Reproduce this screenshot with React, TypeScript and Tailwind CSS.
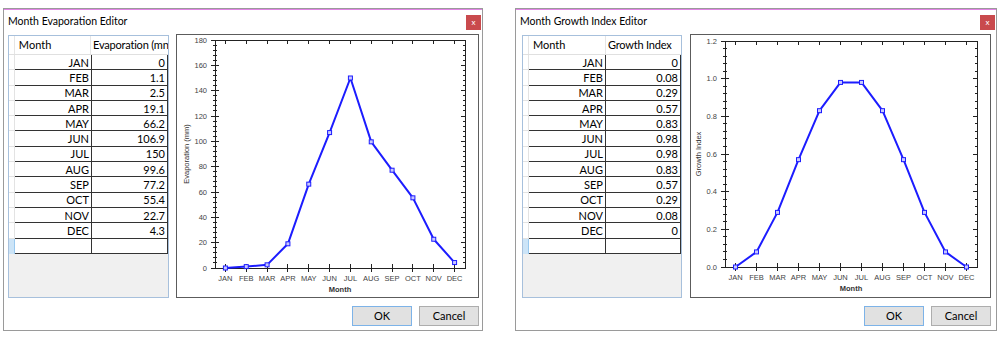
import type { ReactNode } from 'react';

const MONTHS = ['JAN', 'FEB', 'MAR', 'APR', 'MAY', 'JUN', 'JUL', 'AUG', 'SEP', 'OCT', 'NOV', 'DEC'];

type ChartProps = {
  values: number[];
  yMax: number;
  yStep: number;
  fmt: (v: number) => string;
  yTitle: string;
  width: number;
  height: number;
  L: number;
  R: number;
  T: number;
  B: number;
  titleX: number;
};

function Chart({ values, yMax, yStep, fmt, yTitle, width, height, L, R, T, B, titleX }: ChartProps) {
  const sub = 5;
  const majors = Math.round(yMax / yStep);
  const yOf = (v: number) => B - (v / yMax) * (B - T);
  const binW = (R - L) / 12;
  const xOf = (i: number) => L + binW * (i + 0.5);

  const ticks: ReactNode[] = [];
  for (let i = 0; i <= majors * sub; i++) {
    const y = yOf((i / sub) * yStep);
    const major = i % sub === 0;
    const len = major ? 4 : 2;
    ticks.push(<line key={'l' + i} x1={L - len} x2={L + len} y1={y} y2={y} />);
    ticks.push(<line key={'r' + i} x1={R - len} x2={R} y1={y} y2={y} />);
  }
  MONTHS.forEach((_, i) => {
    const x = xOf(i);
    ticks.push(<line key={'b' + i} x1={x} x2={x} y1={B - 4} y2={B + 4} />);
    ticks.push(<line key={'t' + i} x1={x} x2={x} y1={T} y2={T + 4} />);
  });

  const points = values.map((v, i) => `${xOf(i)},${yOf(v)}`).join(' ');

  return (
    <svg width={width} height={height} className="block">
      <g stroke="#222" strokeWidth={1} shapeRendering="crispEdges">
        <rect x={L} y={T} width={R - L} height={B - T} fill="none" />
        {ticks}
      </g>
      <g fill="#444" fontSize={7.5} fontFamily="'Liberation Sans', Arial, sans-serif">
        {Array.from({ length: majors + 1 }, (_, i) => (
          <text key={i} x={L - 8} y={yOf(i * yStep) + 2.5} textAnchor="end">
            {fmt(i * yStep)}
          </text>
        ))}
        {MONTHS.map((m, i) => (
          <text key={m} x={xOf(i)} y={B + 13} textAnchor="middle">
            {m}
          </text>
        ))}
        <text x={(L + R) / 2} y={B + 24} textAnchor="middle" fontWeight="bold" fill="#333">
          Month
        </text>
        <text
          x={titleX}
          y={(T + B) / 2}
          textAnchor="middle"
          fill="#333"
          transform={`rotate(-90 ${titleX} ${(T + B) / 2})`}
        >
          {yTitle}
        </text>
      </g>
      <polyline points={points} fill="none" stroke="#1c1cff" strokeWidth={2} strokeLinejoin="round" />
      {values.map((v, i) => (
        <rect
          key={i}
          x={xOf(i) - 2}
          y={yOf(v) - 2}
          width={4}
          height={4}
          fill="#c8c8ff"
          stroke="#1c1cff"
          strokeWidth={1}
        />
      ))}
    </svg>
  );
}

type GridProps = {
  header: string;
  values: string[];
  monthW: number;
  valueW: number;
};

function Grid({ header, values, monthW, valueW }: GridProps) {
  return (
    <div className="mt-[1px] h-[263px] border border-[#a7c0dc] bg-[#f0f0f0] flex flex-col overflow-hidden">
      <div className="flex h-[19px] bg-white border-b border-[#e0e0e0] shrink-0 text-[11px]">
        <div className="w-[6px] border-r border-[#e5e5e5]" />
        <div style={{ width: monthW }} className="px-[4px] border-r border-[#e5e5e5] flex items-center">
          Month
        </div>
        <div style={{ width: valueW }} className="pl-[2px] flex items-center whitespace-nowrap tracking-[-0.2px]">
          {header}
        </div>
      </div>
      {[...values, ''].map((v, i) => {
        const last = i === values.length;
        return (
          <div key={i} className="flex h-[15.3px] shrink-0">
            <div
              className={
                last
                  ? 'w-[6px] bg-[#cce4f7] border-r border-[#99c9ef]'
                  : 'w-[6px] bg-white border-r border-b border-[#e3e3e3]'
              }
            />
            <div
              style={{ width: monthW }}
              className="bg-white border-r border-b border-[#333] flex items-center justify-end pr-[2px] leading-none"
            >
              {last ? '' : MONTHS[i]}
            </div>
            <div
              style={{ width: valueW }}
              className="bg-white border-r border-b border-[#333] flex items-center justify-end pr-[2px] leading-none"
            >
              {v}
            </div>
          </div>
        );
      })}
    </div>
  );
}

type EditorProps = {
  title: string;
  header: string;
  values: number[];
  cells: string[];
  yMax: number;
  yStep: number;
  fmt: (v: number) => string;
  yTitle: string;
  width: number;
  padL: number;
  padR: number;
  gridW: number;
  monthW: number;
  valueW: number;
  gap: number;
  chartW: number;
  axes: { L: number; R: number; T: number; B: number; titleX: number };
};

function Editor(p: EditorProps) {
  return (
    <div style={{ width: p.width }} className="h-[323px] border border-[#9a9a9a] bg-white flex flex-col">
      <div className="h-[1px] bg-[#e283e6]" />
      <div className="h-[24px] flex items-center justify-between pl-[4px] pr-[1px]">
        <span className="text-[10.5px]">{p.title}</span>
        <button className="w-[15px] h-[15px] bg-[#c94a4d] text-white text-[8px] leading-none flex items-center justify-center">
          x
        </button>
      </div>
      <div style={{ paddingLeft: p.padL, paddingRight: p.padR, gap: p.gap }} className="flex h-[264px]">
        <div style={{ width: p.gridW }} className="shrink-0">
          <Grid header={p.header} values={p.cells} monthW={p.monthW} valueW={p.valueW} />
        </div>
        <div style={{ width: p.chartW }} className="h-[264px] border border-[#5c5c5c] bg-white shrink-0">
          <Chart
            values={p.values}
            yMax={p.yMax}
            yStep={p.yStep}
            fmt={p.fmt}
            yTitle={p.yTitle}
            width={p.chartW - 2}
            height={262}
            {...p.axes}
          />
        </div>
      </div>
      <div style={{ paddingRight: p.padR }} className="flex justify-end gap-[7px] mt-[8px]">
        <button className="w-[60px] h-[20px] bg-[#e1e1e1] border border-[#7db3e8]">OK</button>
        <button className="w-[60px] h-[20px] bg-[#e1e1e1] border border-[#adadad]">Cancel</button>
      </div>
    </div>
  );
}

const evap = [0, 1.1, 2.5, 19.1, 66.2, 106.9, 150, 99.6, 77.2, 55.4, 22.7, 4.3];
const growth = [0, 0.08, 0.29, 0.57, 0.83, 0.98, 0.98, 0.83, 0.57, 0.29, 0.08, 0];

export default function App() {
  return (
    <div
      className="w-[1000px] h-[338px] bg-white flex pt-[8px] pl-[3px] gap-[32px] text-[11px] text-black"
      style={{ fontFamily: "Lato, 'Noto Sans', sans-serif" }}
    >
      <Editor
        title="Month Evaporation Editor"
        header="Evaporation (mn"
        values={evap}
        cells={evap.map(String)}
        yMax={180}
        yStep={20}
        fmt={v => String(Math.round(v))}
        yTitle="Evaporation (mm)"
        width={480}
        padL={4}
        padR={3}
        gridW={161}
        monthW={78}
        valueW={77}
        gap={7}
        chartW={303}
        axes={{ L: 38, R: 288, T: 5, B: 233, titleX: 12 }}
      />
      <Editor
        title="Month Growth Index Editor"
        header="Growth Index"
        values={growth}
        cells={growth.map(String)}
        yMax={1.2}
        yStep={0.2}
        fmt={v => v.toFixed(1)}
        yTitle="Growth Index"
        width={482}
        padL={6}
        padR={5}
        gridW={160}
        monthW={78}
        valueW={76}
        gap={8}
        chartW={301}
        axes={{ L: 34, R: 286, T: 6, B: 232, titleX: 10 }}
      />
    </div>
  );
}
